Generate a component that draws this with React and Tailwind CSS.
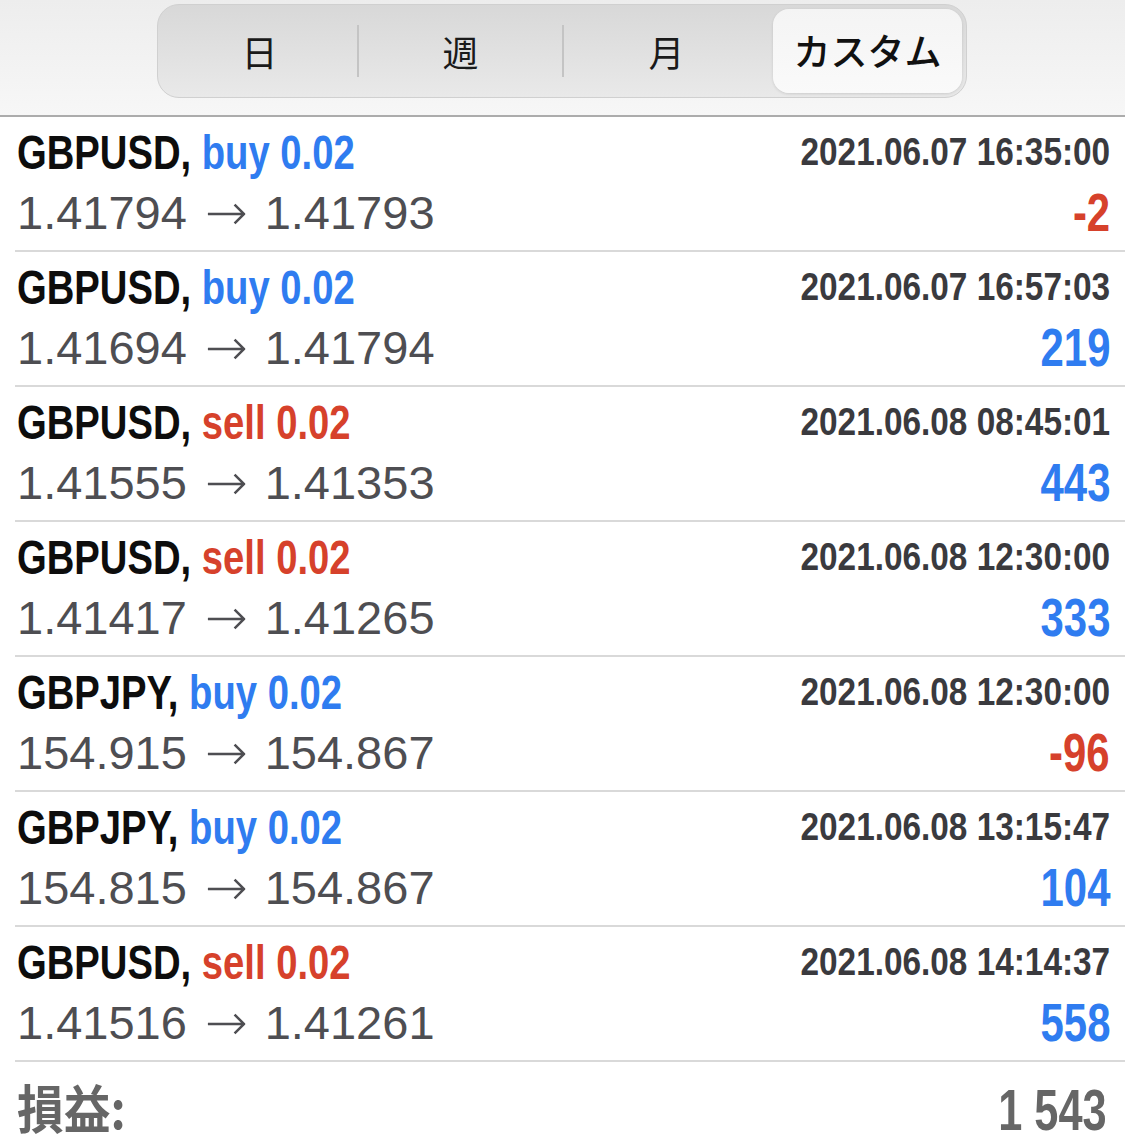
import React from "react";

const rows = [
  { sym: "GBPUSD", side: "buy", vol: "0.02", from: "1.41794", to: "1.41793", date: "2021.06.07 16:35:00", pnl: "-2" },
  { sym: "GBPUSD", side: "buy", vol: "0.02", from: "1.41694", to: "1.41794", date: "2021.06.07 16:57:03", pnl: "219" },
  { sym: "GBPUSD", side: "sell", vol: "0.02", from: "1.41555", to: "1.41353", date: "2021.06.08 08:45:01", pnl: "443" },
  { sym: "GBPUSD", side: "sell", vol: "0.02", from: "1.41417", to: "1.41265", date: "2021.06.08 12:30:00", pnl: "333" },
  { sym: "GBPJPY", side: "buy", vol: "0.02", from: "154.915", to: "154.867", date: "2021.06.08 12:30:00", pnl: "-96" },
  { sym: "GBPJPY", side: "buy", vol: "0.02", from: "154.815", to: "154.867", date: "2021.06.08 13:15:47", pnl: "104" },
  { sym: "GBPUSD", side: "sell", vol: "0.02", from: "1.41516", to: "1.41261", date: "2021.06.08 14:14:37", pnl: "558" },
];

const bold = "font-['Liberation_Sans',Arial,sans-serif] font-bold";
const jp = "font-['Noto_Sans_CJK_JP','Noto_Sans',sans-serif]";

function Row({ r }) {
  const sideColor = r.side === "buy" ? "text-[#2f7cf0]" : "text-[#d6412b]";
  const pnlColor = r.pnl.startsWith("-") ? "text-[#d6412b]" : "text-[#2f7cf0]";
  return (
    <div className="ml-[15px] border-b-2 border-[#d9d9d9] pr-[15px]">
      <div className="pt-[7px] flex justify-between items-center h-[63px]">
        <div className={`${bold} text-[49px] leading-[56px] pl-[2px] text-[#0d0d0d] whitespace-nowrap`}>
          <span className="inline-block origin-left scale-x-[0.78]">
            {r.sym},{" "}
            <span className={sideColor}>
              {r.side} {r.vol}
            </span>
          </span>
        </div>
        <div className={`${bold} text-[39px] leading-[56px] text-[#3a3a3e] whitespace-nowrap`}>
          <span className="inline-block origin-right scale-x-[0.855]">{r.date}</span>
        </div>
      </div>
      <div className="flex justify-between items-center h-[70px] pb-[4px]">
        <div className="font-['Liberation_Sans',Arial,sans-serif] text-[47px] leading-[66px] pl-[2px] text-[#4e4e52] whitespace-nowrap flex items-center">
          <span>{r.from}</span>
          <span className="font-['DejaVu_Sans',sans-serif] text-[51px] ml-[18px] mr-[17px] font-light leading-[66px]">→</span>
          <span>{r.to}</span>
        </div>
        <div className={`${bold} text-[53px] leading-[66px] ${pnlColor} whitespace-nowrap`}>
          <span className="inline-block origin-right scale-x-[0.79]">{r.pnl}</span>
        </div>
      </div>
    </div>
  );
}

export default function App() {
  const segs = [
    { t: "日", w: "w-[195px]" },
    { t: "週", w: "w-[203px]" },
    { t: "月", w: "w-[205px]" },
  ];
  return (
    <div className="w-[1125px] h-[1144px] bg-white overflow-hidden">
      <div className="h-[117px] bg-gradient-to-b from-[#ededed] to-[#f7f7f7] border-b-2 border-[#acacac] pt-[4px]">
        <div className="ml-[157px] w-[810px] h-[94px] rounded-[22px] bg-gradient-to-b from-[#d8d8d8] to-[#e9e9e9] border border-[#d0d0d0] flex items-center pl-[4px] pr-[4px]">
          {segs.map((s, i) => (
            <div key={s.t} className="flex items-center h-full">
              <div className={`${jp} ${s.w} text-center text-[36px] text-[#1a1a1a]`}>{s.t}</div>
              {i < 2 && <div className="w-[2px] h-[52px] bg-[#c4c4c4]" />}
            </div>
          ))}
          <div className={`${jp} ml-[4px] w-[189px] h-[84px] rounded-[16px] bg-gradient-to-b from-[#f4f4f4] to-[#fafafa] shadow-[0_1px_3px_rgba(0,0,0,0.12)] flex items-center justify-center text-[37px] font-medium text-[#111111]`}>
            カスタム
          </div>
        </div>
      </div>
      {rows.map((r, i) => (
        <Row key={i} r={r} />
      ))}
      <div className="flex justify-between items-center h-[82px] pl-[17px] pr-[18px]">
        <div className={`${jp} font-bold text-[52px] leading-[60px] text-[#666666] whitespace-nowrap mt-[8px]`}>
          <span className="inline-block origin-left scale-x-[0.9]">損益:</span>
        </div>
        <div className={`${bold} text-[57px] leading-[60px] text-[#666666] whitespace-nowrap mt-[14px]`}>
          <span className="inline-block origin-right scale-x-[0.76]">1 543</span>
        </div>
      </div>
    </div>
  );
}
